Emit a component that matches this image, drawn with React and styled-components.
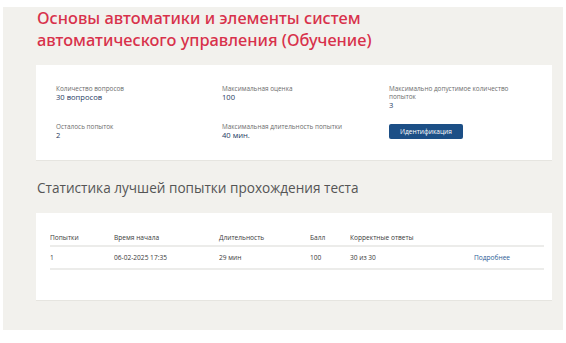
import React from "react";
import styled, { createGlobalStyle } from "styled-components";

const Global = createGlobalStyle`
  body {
    margin: 0;
    background: #ffffff;
    font-family: "Open Sans", "Noto Sans", sans-serif;
  }
`;

const Page = styled.main`
  margin: 7px 3px 0 3px;
  height: 323px;
  background: #f2f1ed;
  padding: 0 11px 0 33px;
  box-sizing: border-box;
  overflow: hidden;
`;

const Title = styled.h1`
  margin: 0;
  padding-left: 1px;
  font-family: "Noto Sans", sans-serif;
  font-weight: 500;
  font-size: 16.4px;
  line-height: 22px;
  color: #d8314b;
`;

const Card = styled.section`
  background: #ffffff;
  margin-top: ${(p) => p.$top}px;
  padding: ${(p) => p.$pad};
  border-bottom: 1px solid #e6e5e0;
  box-sizing: border-box;
  height: ${(p) => p.$height}px;
`;

const InfoGrid = styled.div`
  display: grid;
  grid-template-columns: 166px 167px 1fr;
  row-gap: 13px;
`;

const Field = styled.div`
  display: flex;
  flex-direction: column;
  align-items: flex-start;
  max-width: 135px;
`;

const Label = styled.span`
  font-size: 6.4px;
  line-height: 8px;
  color: #6b6b6b;
`;

const Value = styled.span`
  font-size: 7.6px;
  line-height: 9px;
  font-weight: 400;
  color: #1f3a63;
`;

const Button = styled.button`
  margin-top: 1px;
  width: 74px;
  height: 15px;
  padding: 0;
  border: none;
  border-radius: 2px;
  background: #1c4f86;
  color: #ffffff;
  font-family: "Open Sans", sans-serif;
  font-size: 6.6px;
`;

const Heading = styled.h2`
  margin: 17px 0 0 1px;
  font-family: "Open Sans", sans-serif;
  font-weight: 400;
  font-size: 13.6px;
  line-height: 20px;
  color: #555555;
`;

const Table = styled.table`
  width: 494px;
  border-collapse: collapse;
  font-family: "Open Sans", sans-serif;
  font-size: 6.6px;
  color: #3a3a3a;
  table-layout: fixed;
`;

const Th = styled.th`
  text-align: left;
  font-weight: 400;
  padding: 0;
  height: 16px;
  border-bottom: 2px solid #ececea;
  width: ${(p) => p.$w || "auto"};
`;

const Td = styled.td`
  padding: 0;
  height: 21px;
  border-bottom: 2px solid #ececea;
  color: ${(p) => (p.$link ? "#2c5c96" : "#3a3a3a")};
`;

const info = [
  { label: "Количество вопросов", value: "30 вопросов" },
  { label: "Максимальная оценка", value: "100" },
  { label: "Максимально допустимое количество попыток", value: "3" },
  { label: "Осталось попыток", value: "2" },
  { label: "Максимальная длительность попытки", value: "40 мин." },
];

export default function App() {
  return (
    <>
      <Global />
      <Page>
        <Title>
          Основы автоматики и элементы систем
          <br />
          автоматического управления (Обучение)
        </Title>
        <Card $top={14} $height={96} $pad="20px 20px 0 20px">
          <InfoGrid>
            {info.map((f) => (
              <Field key={f.label}>
                <Label>{f.label}</Label>
                <Value>{f.value}</Value>
              </Field>
            ))}
            <Field>
              <Button>Идентификация</Button>
            </Field>
          </InfoGrid>
        </Card>
        <Heading>Статистика лучшей попытки прохождения теста</Heading>
        <Card $top={15} $height={88} $pad="16px 8px 0 14px">
          <Table>
            <thead>
              <tr>
                <Th $w="64px">Попытки</Th>
                <Th $w="105px">Время начала</Th>
                <Th $w="91px">Длительность</Th>
                <Th $w="40px">Балл</Th>
                <Th $w="124px">Корректные ответы</Th>
                <Th />
              </tr>
            </thead>
            <tbody>
              <tr>
                <Td>1</Td>
                <Td>06-02-2025 17:35</Td>
                <Td>29 мин</Td>
                <Td>100</Td>
                <Td>30 из 30</Td>
                <Td $link>Подробнее</Td>
              </tr>
            </tbody>
          </Table>
        </Card>
      </Page>
    </>
  );
}
